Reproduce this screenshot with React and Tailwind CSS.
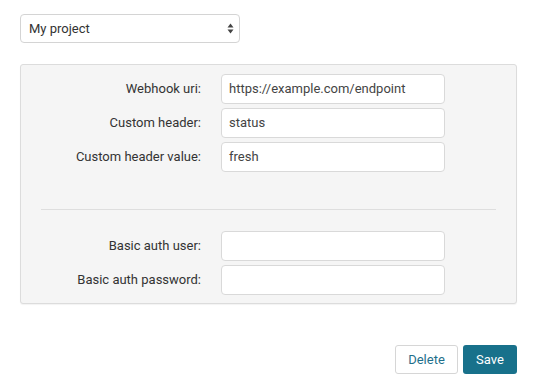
import React from "react";

function Row({ label, value }) {
  return (
    <div className="flex items-center">
      <label className="w-[160px] text-right text-[13px] text-[#333] pr-0">{label}</label>
      <div className="ml-[20px] w-[224px] h-[30px] bg-white border border-[#d9d9d9] rounded-[4px] px-[7px] flex items-center text-[13px] text-[#444]">
        {value}
      </div>
    </div>
  );
}

export default function App() {
  return (
    <div className="w-[538px] h-[390px] bg-white px-[20px] pt-[14px] font-['Roboto',sans-serif]">
      <div className="w-[220px] h-[29px] border border-[#d4d4d4] rounded-[4px] bg-white flex items-center justify-between pl-[8px] pr-[5px] text-[13px] text-[#333]">
        <span>My project</span>
        <svg width="7" height="11" viewBox="0 0 7 11">
          <path d="M3.5 0.5 L6.5 4.5 L0.5 4.5 Z" fill="#444" />
          <path d="M3.5 10.5 L6.5 6.5 L0.5 6.5 Z" fill="#444" />
        </svg>
      </div>
      <div className="mt-[21px] w-[497px] h-[240px] bg-[#f5f5f5] border border-[#dcdcdc] rounded-[3px] shadow-[0_1px_1px_rgba(0,0,0,0.05)] px-[20px] pt-[9px]">
        <div className="flex flex-col gap-[4px]">
          <Row label="Webhook uri:" value="https://example.com/endpoint" />
          <Row label="Custom header:" value="status" />
          <Row label="Custom header value:" value="fresh" />
        </div>
        <div className="mt-[37px] border-t border-[#dedede]" />
        <div className="mt-[21px] flex flex-col gap-[4px]">
          <Row label="Basic auth user:" value="" />
          <Row label="Basic auth password:" value="" />
        </div>
      </div>
      <div className="mt-[41px] w-[497px] flex justify-end gap-[5px]">
        <button className="w-[63px] h-[29px] border border-[#d6d6d6] rounded-[3px] bg-white text-[13px] text-[#1f6f8b]">Delete</button>
        <button className="w-[54px] h-[29px] rounded-[3px] bg-[#18718b] text-[13px] text-white">Save</button>
      </div>
    </div>
  );
}
